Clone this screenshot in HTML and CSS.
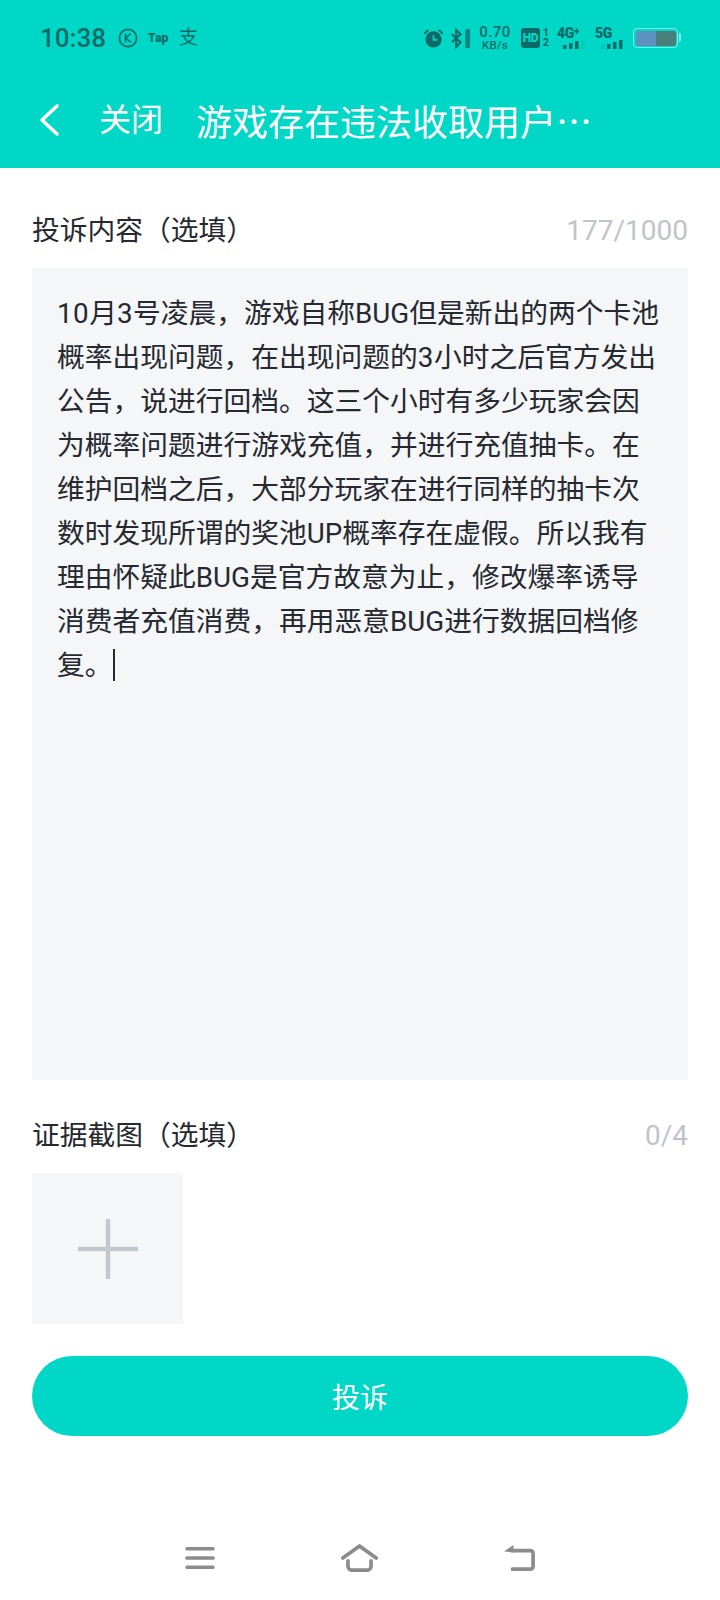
FILE: index.html
```html
<!DOCTYPE html>
<html lang="zh-CN">
<head>
<meta charset="utf-8">
<title>投诉</title>
<link rel="stylesheet" href="styles.css">
</head>
<body>
<div class="page">
  <header class="top">
    <div class="status">
      <div class="status-left">
        <span class="time">10:38</span>
        <svg class="ic-k" viewBox="0 0 20 20"><circle cx="10" cy="10" r="8.6" fill="none" stroke="#0B6A66" stroke-width="1.7"/><path d="M7.5 5.500v9M12.800 5.500 7.600 10l5.400 4.500" fill="none" stroke="#0B6A66" stroke-width="1.6"/></svg>
        <span class="tap">Tap</span>
        <span class="zhi">支</span>
      </div>
      <div class="status-right">
        <svg class="ic-alarm" viewBox="0 0 22 22"><circle cx="11" cy="12" r="8.500" fill="#0B6A66"/><path d="M11 7.500V12.500H15" fill="none" stroke="#00D7C6" stroke-width="1.8"/><path d="M1.500 6 5.500 2M20.500 6 16.500 2" stroke="#0B6A66" stroke-width="2" fill="none"/></svg>
        <svg class="ic-bt" viewBox="0 0 22 22"><path d="M2 6.500 11 15 6.500 20V2L11 6.500 2 15" fill="none" stroke="#0B6A66" stroke-width="2.200"/><rect x="16" y="1" width="5" height="20" rx="1" fill="#0B6A66" opacity=".75"/></svg>
        <div class="speed"><span class="speed-n">0.70</span><span class="speed-u">KB/s</span></div>
        <span class="hd">HD</span>
        <div class="sim"><span>1</span><span>2</span></div>
        <div class="net">
          <span class="net-l">4G<sup>+</sup></span>
          <svg class="bars" viewBox="0 0 24 9"><rect x="1" y="5" width="3.500" height="4" fill="#0B6A66"/><rect x="7" y="3" width="3.500" height="6" fill="#0B6A66"/><rect x="13" y="1" width="3.500" height="8" fill="#0B6A66"/><rect x="19" y="0" width="3.500" height="9" fill="#0B6A66" opacity=".1"/></svg>
        </div>
        <div class="net">
          <span class="net-l">5G</span>
          <svg class="bars" viewBox="0 0 24 9"><rect x="1" y="5" width="3.500" height="4" fill="#0B6A66" opacity=".15"/><rect x="7" y="4" width="3.500" height="5" fill="#0B6A66"/><rect x="13" y="2" width="3.500" height="7" fill="#0B6A66"/><rect x="19" y="0" width="3.500" height="9" fill="#0B6A66"/></svg>
        </div>
        <div class="battery"><span class="batt-a"></span><span class="batt-b"></span></div>
      </div>
    </div>
    <div class="nav">
      <svg class="back" viewBox="0 0 22 34"><path d="M19 3 4 17l15 14" fill="none" stroke="#fff" stroke-width="3.600" stroke-linecap="round" stroke-linejoin="round"/></svg>
      <span class="close">关闭</span>
      <span class="title">游戏存在违法收取用户…</span>
    </div>
  </header>

  <main class="body">
    <div class="label-row">
      <span class="label">投诉内容（选填）</span>
      <span class="count">177/1000</span>
    </div>
    <div class="panel">
      <p class="text"><span class="num">10</span>月<span class="num">3</span>号凌晨，游戏自称BUG但是新出的两个卡池<br>概率出现问题，在出现问题的<span class="num">3</span>小时之后官方发出<br>公告，说进行回档。这三个小时有多少玩家会因<br>为概率问题进行游戏充值，并进行充值抽卡。在<br>维护回档之后，大部分玩家在进行同样的抽卡次<br>数时发现所谓的奖池UP概率存在虚假。所以我有<br>理由怀疑此BUG是官方故意为止，修改爆率诱导<br>消费者充值消费，再用恶意BUG进行数据回档修<br>复。<span class="caret"></span></p>
    </div>
    <div class="label-row second">
      <span class="label">证据截图（选填）</span>
      <span class="count">0/4</span>
    </div>
    <div class="add">
      <svg class="plus" viewBox="0 0 62 62"><path d="M31 0V62M0 31H62" stroke="#C3C7CE" stroke-width="4.500" fill="none"/></svg>
    </div>
    <button class="submit">投诉</button>
  </main>

  <footer class="softkeys">
    <svg class="key menu" viewBox="0 0 32 26"><path d="M2 3H30M2 13H30M2 23H30" stroke="#8C8C8C" stroke-width="4" stroke-linecap="round" fill="none"/></svg>
    <svg class="key home" viewBox="0 0 40 30"><path d="M2 15 20 2l18 13" stroke="#8C8C8C" stroke-width="4" stroke-linecap="round" stroke-linejoin="round" fill="none"/><path d="M7.500 18v6a4 4 0 0 0 4 4h17a4 4 0 0 0 4-4v-6" stroke="#8C8C8C" stroke-width="4" stroke-linecap="round" fill="none"/></svg>
    <svg class="key ret" viewBox="0 0 34 30"><path d="M8 7H28a3 3 0 0 1 3 3V24a3 3 0 0 1-3 3H9" stroke="#8C8C8C" stroke-width="4" stroke-linecap="round" fill="none"/><path d="M0 8 10 1V9Z" fill="#8C8C8C"/></svg>
  </footer>
</div>
</body>
</html>
```

FILE: styles.css
```css
* { box-sizing: border-box; }
html, body { margin: 0; padding: 0; }
body {
  background: #fff;
  font-family: Roboto, "Noto Sans CJK SC", sans-serif;
  color: #262930;
  text-spacing-trim: space-all;
  font-kerning: none;
}
.page {
  width: 720px;
  height: 1600px;
  display: flex;
  flex-direction: column;
  overflow: hidden;
}
.top {
  height: 168px;
  background: #00D7C6;
  display: flex;
  flex-direction: column;
  flex: none;
}
.status {
  height: 76px;
  padding: 0 42px 0 40px;
  display: flex;
  align-items: center;
  justify-content: space-between;
  color: #0B6A66;
}
.status-left, .status-right { display: flex; align-items: center; }
.time { font-size: 26px; line-height: 28px; font-weight: 500; }
.ic-k { width: 20px; height: 20px; margin-left: 12px; }
.tap { font-size: 12px; line-height: 14px; font-weight: 900; margin-left: 10px; width: 20px; letter-spacing: -.2px; }
.zhi { font-size: 19px; line-height: 20px; margin-left: 11px; }
.ic-alarm { width: 21px; height: 21px; }
.ic-bt { width: 21px; height: 21px; margin-left: 6px; }
.speed { display: flex; flex-direction: column; align-items: center; margin-left: 9px; width: 30px; }
.speed-n { font-size: 15px; line-height: 13px; font-weight: 500; letter-spacing: .4px; }
.speed-u { font-size: 11.500px; line-height: 11px; font-weight: 500; letter-spacing: .3px; margin-top: 1px; }
.hd {
  margin-left: 11px;
  width: 19px;
  height: 20px;
  background: #0B6A66;
  color: #00D7C6;
  border-radius: 3px;
  font-size: 12px;
  line-height: 20px;
  font-weight: 900;
  text-align: center;
  letter-spacing: -.4px;
}
.sim { display: flex; flex-direction: column; align-items: center; margin-left: 2px; width: 8px; font-size: 11px; line-height: 10px; font-weight: 700; }
.net { display: flex; flex-direction: column; margin-left: 7px; width: 30px; }
.net + .net { margin-left: 8px; }
.net-l { font-size: 14px; line-height: 12px; font-weight: 900; letter-spacing: -.3px; white-space: nowrap; }
.net-l sup { font-size: 10px; line-height: 0; vertical-align: 3px; }
.bars { width: 24px; height: 9px; margin: 1px 0 0 5px; }
.battery {
  margin-left: 8px;
  width: 45px;
  height: 20px;
  border: 1.500px solid #7FEAF0;
  border-radius: 4px;
  padding: 1.500px;
  display: flex;
  position: relative;
}
.battery::after {
  content: "";
  position: absolute;
  right: -4px;
  top: 4px;
  width: 2.500px;
  height: 9px;
  background: #7FEAF0;
  border-radius: 0 2px 2px 0;
}
.batt-a { flex: 22; background: #5E92BE; border-radius: 2px 0 0 2px; }
.batt-b { flex: 20; background: #47807C; border-radius: 0 2px 2px 0; }
.nav {
  height: 92px;
  padding: 0 0 5px 38px;
  display: flex;
  align-items: center;
  color: #fff;
}
.back { width: 22px; height: 34px; flex: none; }
.close { font-size: 32px; line-height: 40px; margin-left: 39px; }
.title { font-family: "Noto Sans CJK SC", sans-serif; font-size: 36px; line-height: 44px; margin-left: 33px; white-space: nowrap; }
.body {
  flex: none;
  padding: 0 32px;
  display: flex;
  flex-direction: column;
}
.label-row {
  display: flex;
  justify-content: space-between;
  align-items: center;
  margin-top: 43px;
  height: 40px;
}
.label-row.second { margin-top: 36px; }
.label { font-size: 27.750px; line-height: 40px; }
.count { font-size: 28px; line-height: 40px; color: #C0C4CA; }
.panel {
  margin-top: 17px;
  height: 812px;
  background: #F4F6F8;
  padding: 24px 25px;
}
.text { margin: 0; font-size: 27.750px; line-height: 44px; white-space: nowrap; }
.num { letter-spacing: .5px; }
.caret {
  display: inline-block;
  width: 2px;
  height: 32px;
  vertical-align: -6px;
  background: #262930;
}
.add {
  margin-top: 17px;
  width: 151px;
  height: 151px;
  background: #F4F6F8;
  display: flex;
  align-items: center;
  justify-content: center;
  flex: none;
}
.plus { width: 60px; height: 60px; }
.submit {
  margin-top: 32px;
  width: 656px;
  height: 80px;
  flex: none;
  background: #00D7C6;
  border: 0;
  border-radius: 40px;
  color: #fff;
  font-family: inherit;
  font-size: 28px;
  font-weight: 400;
}
.softkeys {
  margin-top: auto;
  height: 80px;
  flex: none;
  padding: 0 184px 4px 185px;
  display: flex;
  align-items: center;
  justify-content: space-between;
}
.key.menu { width: 30px; height: 24px; }
.key.home { width: 37px; height: 28px; }
.key.ret { width: 32px; height: 28px; }
```
